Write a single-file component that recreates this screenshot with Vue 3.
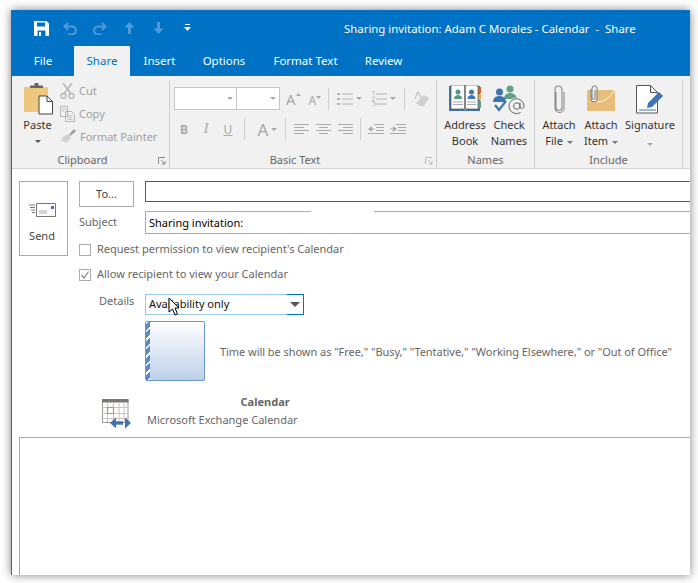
<template>
  <div class="screen">
    <div class="window">
      <!-- title bar -->
      <div class="titlebar">
        <div class="qat">
          <svg class="qat-save" width="15" height="15" viewBox="0 0 15 15"><path d="M0 0h12.5L15 2.5V15H0z" fill="#fff" /><path d="M3 1.500h8v4H3z" fill="#0072c6" /><path d="M3.500 9.500h8V15h-8z" fill="#0072c6" /><path d="M5 11h2v4H5z" fill="#fff" /></svg>
          <svg class="qat-dim" width="15" height="13" viewBox="0 0 15 13"><path d="M5 1 1.500 4.500 5 8M2 4.500h7a4 4 0 0 1 0 8H5" fill="none" stroke="#4f9bd8" stroke-width="2" /></svg>
          <svg class="qat-dim redo" width="15" height="13" viewBox="0 0 15 13"><path d="M10 1l3.500 3.500L10 8M13 4.500H6a4 4 0 0 0 0 8h4" fill="none" stroke="#4f9bd8" stroke-width="2" /></svg>
          <svg class="qat-dim up" width="11" height="12" viewBox="0 0 11 12"><path d="M5.500 0 10.500 5.500H7V12H4V5.500H.5z" fill="#4f9bd8" /></svg>
          <svg class="qat-dim down" width="11" height="12" viewBox="0 0 11 12"><path d="M5.500 12 10.500 6.500H7V0H4v6.500H.5z" fill="#4f9bd8" /></svg>
          <svg class="qat-more" width="7" height="8" viewBox="0 0 7 8"><path d="M1 0h5v1H1zM0 3h7L3.500 7z" fill="#fff" /></svg>
        </div>
        <div class="title">Sharing invitation: Adam C Morales - Calendar&nbsp; -&nbsp; Share</div>
      </div>

      <!-- tabs -->
      <div class="tabs">
        <div v-for="t in tabs" :key="t.name" class="tab" :class="{ active: t.name === 'Share' }" :style="{ width: t.width + 'px' }">{{ t.name }}</div>
      </div>

      <!-- ribbon -->
      <div class="ribbon">
        <div class="group clipboard">
          <div class="group-body">
            <div class="paste">
              <svg width="29" height="32" viewBox="0 0 29 32">
                <rect x="0" y="4" width="24" height="25" rx="1" fill="#eec77e" />
                <path d="M6 5V2.500h4.500V0h4v2.500H19V5z" fill="#666" />
                <path d="M15 13h8l5.500 5.500V31H15z" fill="#fff" stroke="#444" />
                <path d="M23 13v5.500h5.500" fill="none" stroke="#444" />
              </svg>
              <span>Paste</span>
              <i class="caret dark"></i>
            </div>
            <div class="small-col">
              <div class="small-btn">
                <svg width="15" height="16" viewBox="0 0 15 16"><path d="M3 0l8 11M12 0 4 11" stroke="#b5b5b5" stroke-width="1.500" fill="none" /><circle cx="3.500" cy="13" r="2.500" fill="none" stroke="#b5b5b5" stroke-width="1.300" /><circle cx="11.500" cy="13" r="2.500" fill="none" stroke="#b5b5b5" stroke-width="1.300" /></svg>
                <span>Cut</span>
              </div>
              <div class="small-btn">
                <svg width="15" height="16" viewBox="0 0 15 16"><path d="M.5.500h7v10h-7zM5.500 5.500h6l3 3v7h-9z" fill="#f1f1f1" stroke="#b5b5b5" /><path d="M2 3h4M2 5h2M7.500 9.500h5M7.500 11.500h5M7.500 13.500h5" stroke="#c4c4c4" /></svg>
                <span>Copy</span>
              </div>
              <div class="small-btn">
                <svg width="16" height="15" viewBox="0 0 16 15"><path d="M9 6l3-4 2-2 2 2-2 2-4 3z" fill="#9f9f9f" /><path d="M8 5l3 3-4 6-7-3 3-1-2-1 2-1z" fill="#d2d2d2" /></svg>
                <span>Format Painter</span>
              </div>
            </div>
          </div>
          <div class="group-label offset">Clipboard<svg class="launcher" width="8" height="8" viewBox="0 0 8 8"><path d="M.5 7V.5H7M3 3l4 4M7 4v3H4" fill="none" stroke="#888" /></svg></div>
        </div>

        <div class="group basic">
          <div class="group-body basic-body">
            <div class="basic-row top">
              <div class="combo font"><i class="caret"></i></div>
              <div class="combo size"><i class="caret"></i></div>
              <span class="glyph grow">A<svg width="5" height="3" viewBox="0 0 5 3"><path d="M0 3 2.500 0 5 3z" fill="#a9a9a9" /></svg></span>
              <span class="glyph shrink">A<svg width="5" height="3" viewBox="0 0 5 3"><path d="M0 0 2.500 3 5 0z" fill="#a9a9a9" /></svg></span>
              <b class="vsep first"></b>
              <svg class="list" width="16" height="15" viewBox="0 0 16 15"><path d="M0 2h3v2H0zM0 7h3v2H0zM0 12h3v2H0z" fill="#b5b5b5" /><path d="M5 3h11M5 8h11M5 13h11" stroke="#b5b5b5" /></svg>
              <i class="caret"></i>
              <svg class="list num" width="16" height="15" viewBox="0 0 16 15"><path d="M1 0h2v4M1 6h3L1 10h3M1 11h3v4H1" fill="none" stroke="#b5b5b5" stroke-width=".8" /><path d="M5 3h11M5 8h11M5 13h11" stroke="#b5b5b5" /></svg>
              <i class="caret"></i>
              <b class="vsep second"></b>
              <svg class="eraser" width="15" height="16" viewBox="0 0 15 16"><path d="M6 15l-4-3 8-8 5 3-5 8z" fill="#cfcfcf" /><path d="M1 8 3.500 1h1L7 7" fill="none" stroke="#b5b5b5" /></svg>
            </div>
            <div class="basic-row bottom">
              <span class="fmt b">B</span>
              <span class="fmt i">I</span>
              <span class="fmt u">U</span>
              <b class="vsep third"></b>
              <span class="fmt big">A</span>
              <i class="caret"></i>
              <b class="vsep fourth"></b>
              <svg v-for="(a, i) in aligns" :key="i" class="align" width="15" height="11" viewBox="0 0 15 11"><path :d="a" stroke="#ababab" fill="none" /></svg>
              <b class="vsep fifth"></b>
              <svg class="indent" width="16" height="11" viewBox="0 0 16 11"><path d="M6 .5h10M8 3.500h8M8 6.500h8M0 9.500h16" stroke="#ababab" /><path d="M0 5l4-3v6z" fill="#ababab" /><path d="M3 5h4" stroke="#ababab" /></svg>
              <svg class="indent two" width="16" height="11" viewBox="0 0 16 11"><path d="M6 .5h10M8 3.500h8M8 6.500h8M0 9.500h16" stroke="#ababab" /><path d="M7 5 3 2v6z" fill="#ababab" /><path d="M0 5h4" stroke="#ababab" /></svg>
            </div>
          </div>
          <div class="group-label offset">Basic Text<svg class="launcher" width="8" height="8" viewBox="0 0 8 8"><path d="M.5 7V.5H7M3 3l4 4M7 4v3H4" fill="none" stroke="#bbb" /></svg></div>
        </div>

        <div class="group names">
          <div class="group-body big-row">
            <div class="big-btn address">
              <svg width="32" height="26" viewBox="0 0 32 26">
                <path d="M0 1h2v23h13l1 1 1-1h12V1h2v25H0z" fill="#3f74b0" />
                <path d="M29 2h3v6h-3z" fill="#d9603b" /><path d="M29 9h3v6h-3z" fill="#e8b04b" /><path d="M29 16h3v7h-3z" fill="#5da283" />
                <path d="M2 0h13.500v24H2zM16.500 0H29v24H16.500z" fill="#fff" stroke="#555" stroke-width=".7" />
                <circle cx="9" cy="7" r="2.500" fill="#4f9a80" /><path d="M5 14c0-3 2-4 4-4s4 1 4 4z" fill="#4f9a80" />
                <circle cx="22.500" cy="7" r="2.500" fill="#3f74b0" /><path d="M18.500 14c0-3 2-4 4-4s4 1 4 4z" fill="#3f74b0" />
                <path d="M4 17h10M4 19.500h10M18 17h9M18 19.500h9" stroke="#aaa" />
              </svg>
              <span>Address<br />Book</span>
            </div>
            <div class="big-btn check">
              <svg width="32" height="30" viewBox="0 0 32 30">
                <circle cx="17" cy="4" r="3.500" fill="#5da283" /><path d="M11 14c0-4 3-6 6-6s7 2 7 6z" fill="#5da283" />
                <circle cx="6.500" cy="7" r="3.500" fill="#3f74b0" /><path d="M0 17c0-4 3-6 6.500-6s6.500 2 6.500 6z" fill="#3f74b0" />
                <path d="M2 20l4 5 7-9" fill="none" stroke="#3f74b0" stroke-width="2.200" />
                <circle cx="23.500" cy="21" r="8.500" fill="#f1f1f1" stroke="none" />
                <path d="M27.500 27.500A7.500 7.500 0 1 1 31 21c0 3-3.500 3.500-4 1v-4.500M27 21a3.200 3.200 0 1 1-6.400 0 3.200 3.200 0 0 1 6.400 0z" fill="none" stroke="#666" />
              </svg>
              <span>Check<br />Names</span>
            </div>
          </div>
          <div class="group-label">Names</div>
        </div>

        <div class="group include">
          <div class="group-body big-row">
            <div class="big-btn file">
              <svg width="12" height="29" viewBox="0 0 12 29"><path d="M3 7v15.500a3 3 0 0 0 6 0V4.500a3.500 3.500 0 0 0-7 0V23a4.500 4.500 0 0 0 9 0V7" fill="none" stroke="#8a8a8a" stroke-width="1.100" /></svg>
              <span>Attach<br />File <i class="caret inline"></i></span>
            </div>
            <div class="big-btn item">
              <svg width="29" height="27" viewBox="0 0 29 27">
                <rect x="0" y="5" width="28" height="21" fill="#e8bd7c" />
                <path d="M8 16c8 3 14-3 20-11" fill="none" stroke="#fff" stroke-width="1" />
                <path d="M4 4v10a3 3 0 0 0 6 0V3.500a2.500 2.500 0 0 0-5 0V13a1.500 1.500 0 0 0 3 0V5" fill="#f1f1f1" stroke="#777" />
              </svg>
              <span>Attach<br />Item <i class="caret inline"></i></span>
            </div>
            <div class="big-btn signature">
              <svg width="28" height="30" viewBox="0 0 28 30">
                <path d="M.5.500h14l7 7V28H.5z" fill="#fff" stroke="#555" />
                <path d="M14.500.5v7h7" fill="none" stroke="#555" />
                <path d="M3 25h17" stroke="#3f74b0" />
                <path d="M11 23l1-5L23 7l4 4-11 11z" fill="#3f74b0" />
              </svg>
              <span>Signature<br /><i class="caret sig-caret"></i></span>
            </div>
          </div>
          <div class="group-label">Include</div>
        </div>
      </div>

      <!-- compose form -->
      <div class="compose">
        <div class="send">
          <svg width="27" height="14" viewBox="0 0 27 14"><path d="M7.500.5h19v13h-19z" fill="#fff" stroke="#777" /><path d="M10 8h8M10 10h8" stroke="#aaa" /><path d="M22 3h3v3h-3z" fill="#3f74b0" /><path d="M0 2h6M1 4.500h5M2 7h4M3 9.500h3" stroke="#777" /></svg>
          <span>Send</span>
        </div>
        <div class="fields">
          <div class="row to-row">
            <div class="to-btn">To...</div>
            <div class="to-input"></div>
          </div>
          <div class="row subject-row">
            <div class="label subject-label">Subject</div>
            <div class="subject-input">Sharing invitation:<span class="border-gap"></span></div>
          </div>
          <label class="check-row first">
            <span class="box"></span>
            <span class="text">Request permission to view recipient's Calendar</span>
          </label>
          <label class="check-row second">
            <span class="box"><svg width="12" height="12" viewBox="0 0 12 12"><path d="M2.500 6 5 9l4.500-6.500" fill="none" stroke="#888" stroke-width="1.300" /></svg></span>
            <span class="text">Allow recipient to view your Calendar</span>
          </label>
          <div class="row details-row">
            <div class="label details-label">Details</div>
            <div class="select">
              <span>Availability only</span>
              <i class="select-arrow"></i>
            </div>
          </div>
          <div class="row preview-row">
            <div class="preview"></div>
            <div class="text">Time will be shown as "Free," "Busy," "Tentative," "Working Elsewhere," or "Out of Office"</div>
          </div>
          <div class="row calendar-row">
            <svg class="cal-icon" width="30" height="30" viewBox="0 0 30 30">
              <path d="M.5 1h25.500v22.500H.5z" fill="#fff" stroke="#999" />
              <path d="M0 0h26.500v3.500H0z" fill="#777" />
              <path d="M5.500 3v20M11.500 3v20M17 3v20M22 3v20M0 8.500h26M0 14.500h26M0 19.500h26" stroke="#c4c4c4" />
              <path d="M5.500 8.500h6v6h-6z" fill="#fff" stroke="#e8893a" stroke-width="1.200" />
              <path d="M0 24h8v6H0zM26 24h4v6h-4z" fill="#fff" />
              <path d="M12 24h9" stroke="#3f74b0" stroke-width="3.400" />
              <path d="M8 24l6-5.500v11zM29 24l-6-5.500v11z" fill="#3f74b0" />
            </svg>
            <div class="cal-text">
              <div class="cal-name">Calendar</div>
              <div class="cal-type">Microsoft Exchange Calendar</div>
            </div>
          </div>
        </div>
      </div>

      <div class="body-box"></div>

      <!-- mouse pointer over the dropdown -->
      <svg class="cursor" width="13" height="20" viewBox="0 0 13 20"><path d="M1 1v14l3.500-3 2.500 6 2.500-1-2.500-6H11z" fill="#fff" stroke="#000" /></svg>
    </div>
  </div>
</template>

<script setup>
const tabs = [
  { name: 'File', width: 62 },
  { name: 'Share', width: 56 },
  { name: 'Insert', width: 59 },
  { name: 'Options', width: 70 },
  { name: 'Format Text', width: 93 },
  { name: 'Review', width: 63 },
]
const aligns = [
  'M0 .5h15M0 3.500h10M0 6.500h15M0 9.500h10',
  'M0 .5h15M3 3.500h9M0 6.500h15M3 9.500h9',
  'M0 .5h15M5 3.500h10M0 6.500h15M5 9.500h10',
]
</script>

<style>
html, body {
  margin: 0;
  background: #fff;
}
</style>

<style scoped>
.screen {
  width: 698px;
  height: 583px;
  box-sizing: border-box;
  padding: 10px 8px 8px 11px;
  overflow: hidden;
  background: #fff;
  font-family: "Noto Sans", "Liberation Sans", sans-serif;
  font-size: 11px;
  color: #444;
}

.window {
  position: relative;
  height: 100%;
  display: flex;
  flex-direction: column;
  box-sizing: border-box;
  border-left: 1px solid #0072c6;
  background: #fff;
  box-shadow: 0 0 9px rgba(0, 0, 0, 0.5);
}

/* title bar */
.titlebar {
  height: 36px;
  flex: none;
  display: flex;
  align-items: center;
  background: #0072c6;
  color: #fff;
}

.qat {
  display: flex;
  align-items: center;
  width: 332px;
  padding-left: 22px;
  box-sizing: border-box;
  flex: none;
}

.qat-dim {
  margin-left: 14px;
}

.qat-dim.up {
  margin-left: 17px;
}

.qat-dim.down {
  margin-left: 18px;
}

.qat-more {
  margin-left: 20px;
}

.title {
  font-size: 11.4px;
  white-space: nowrap;
}

/* tabs */
.tabs {
  height: 30px;
  flex: none;
  display: flex;
  background: #0072c6;
}

.tab {
  text-align: center;
  line-height: 29px;
  font-size: 11.5px;
  color: #fff;
  white-space: nowrap;
}

.tab.active {
  background: #f1f1f1;
  color: #0072c6;
}

/* ribbon */
.ribbon {
  height: 93px;
  flex: none;
  box-sizing: border-box;
  display: flex;
  background: #f1f1f1;
  border-bottom: 1px solid #d4d4d4;
  padding-right: 8px;
}

.group {
  position: relative;
  display: flex;
  flex-direction: column;
  flex: none;
  box-sizing: border-box;
  border-right: 1px solid #cfcfcf;
  height: 88px;
  margin-top: 4px;
}

.group-body {
  flex: 1;
  display: flex;
}

.group-label {
  text-align: center;
  height: 16px;
  line-height: 15px;
  color: #666;
}

.group-label.offset {
  padding-right: 16px;
}

.launcher {
  position: absolute;
  right: 3px;
  bottom: 3px;
}

.clipboard {
  width: 158px;
}

.basic {
  width: 267px;
}

.names {
  width: 98px;
}

.include {
  width: 148px;
}

.caret {
  display: inline-block;
  width: 0;
  height: 0;
  border-left: 3px solid transparent;
  border-right: 3px solid transparent;
  border-top: 3px solid #a9a9a9;
}

.caret.dark {
  border-top-color: #555;
}

.caret.inline {
  vertical-align: middle;
  margin-left: 1px;
  border-top-color: #777;
}

.sig-caret {
  vertical-align: middle;
  margin-top: 4px;
}

/* clipboard */
.paste {
  width: 48px;
  display: flex;
  flex-direction: column;
  align-items: center;
  padding-top: 3px;
  color: #333;
}

.paste span {
  line-height: 16px;
  margin-top: 2px;
  margin-left: 3px;
}

.paste .caret {
  margin-top: 7px;
  margin-left: 3px;
}

.paste svg {
  margin-left: 5px;
}

.small-col {
  margin-top: -1px;
}

.small-btn {
  height: 23px;
  display: flex;
  align-items: center;
  gap: 4px;
  color: #a0a0a0;
  white-space: nowrap;
}

/* basic text */
.basic-body {
  flex-direction: column;
  padding-left: 4px;
}

.basic-row {
  display: flex;
  align-items: center;
}

.basic-row.top {
  height: 23px;
  margin-top: 7px;
}

.basic-row.bottom {
  height: 22px;
  margin-top: 8px;
  margin-left: -1px;
}

.combo {
  height: 23px;
  box-sizing: border-box;
  background: #fff;
  border: 1px solid #c6c6c6;
  display: flex;
  align-items: center;
  justify-content: flex-end;
  padding-right: 3px;
}

.combo.font {
  width: 63px;
}

.combo.size {
  width: 43px;
  border-left: 0;
}

.glyph {
  display: flex;
  color: #a9a9a9;
  font-size: 15px;
}

.glyph svg {
  margin-top: 4px;
}

.glyph.grow {
  margin-left: 6px;
}

.glyph.shrink {
  margin-left: 8px;
  font-size: 12px;
  margin-top: 3px;
}

.vsep {
  width: 1px;
  height: 22px;
  background: #cfcfcf;
}

.vsep.first {
  margin-left: 7px;
}

.list {
  margin: 0 3px 0 8px;
}

.list.num {
  margin-left: 9px;
}

.vsep.second {
  margin-left: 8px;
}

.eraser {
  margin-left: 9px;
}

.fmt {
  color: #a9a9a9;
  font-size: 12px;
  width: 22px;
  text-align: center;
}

.fmt.b {
  font-weight: 700;
}

.fmt.i {
  font-style: italic;
  font-family: "Liberation Serif", serif;
  font-size: 14px;
}

.fmt.u {
  text-decoration: underline;
}

.fmt.big {
  font-size: 17px;
  width: 16px;
  margin-left: 10px;
}

.vsep.third {
  margin-left: 5px;
}

.vsep.fourth {
  margin-left: 8px;
  margin-right: 8px;
}

.align {
  margin-right: 7px;
}

.vsep.fifth {
  margin-right: 7px;
}

.indent.two {
  margin-left: 6px;
}

/* big ribbon buttons */
.big-row {
  align-items: flex-start;
}

.big-btn {
  position: relative;
  display: flex;
  flex-direction: column;
  align-items: center;
  text-align: center;
  line-height: 16px;
  color: #333;
  height: 72px;
  padding-top: 5px;
  box-sizing: border-box;
}

.big-btn svg {
  flex: none;
}

.big-btn > span {
  white-space: nowrap;
  position: absolute;
  top: 37px;
}

.address {
  width: 44px;
  margin-left: 6px;
}

.check {
  width: 44px;
}

.file {
  width: 42px;
  margin-left: 3px;
}

.item {
  width: 42px;
}

.signature {
  width: 56px;
}

/* form */
.compose {
  flex: none;
  height: 268px;
  box-sizing: border-box;
  display: flex;
  padding: 12px 0 0 7px;
}

.send {
  width: 49px;
  height: 75px;
  box-sizing: border-box;
  border: 1px solid #ababab;
  display: flex;
  flex-direction: column;
  align-items: center;
  padding: 21px 3px 0 0;
  color: #444;
}

.send span {
  margin-top: 11px;
  line-height: 16px;
}

.fields {
  flex: 1;
  margin-left: 11px;
  min-width: 0;
}

.row {
  display: flex;
}

.label {
  color: #666;
}

.to-row {
  height: 30px;
  align-items: flex-start;
}

.to-btn {
  width: 55px;
  height: 26px;
  box-sizing: border-box;
  border: 1px solid #ababab;
  text-align: center;
  line-height: 24px;
  color: #444;
}

.to-input {
  flex: 1;
  height: 21px;
  box-sizing: border-box;
  margin-left: 11px;
  border: 1px solid #0072c6;
  border-right: 0;
}

.subject-row {
  height: 23px;
}

.subject-label {
  width: 66px;
  line-height: 21px;
}

.subject-input {
  position: relative;
  flex: 1;
  box-sizing: border-box;
  border: 1px solid #ababab;
  border-right: 0;
  line-height: 21px;
  padding-left: 3px;
  color: #000;
}

.border-gap {
  position: absolute;
  left: 165px;
  top: -1px;
  width: 63px;
  height: 1px;
  background: #fff;
}

.check-row {
  display: flex;
  align-items: center;
  height: 12px;
  margin-top: 10px;
}

.check-row.second {
  margin-top: 13px;
}

.check-row .text {
  margin-top: -3px;
}

.box {
  width: 12px;
  height: 12px;
  box-sizing: border-box;
  border: 1px solid #ababab;
  background: #fff;
  flex: none;
  display: flex;
  align-items: center;
  justify-content: center;
  margin-right: 6px;
}

.box svg {
  flex: none;
}

.text {
  color: #666;
  white-space: nowrap;
}

.details-row {
  height: 20px;
  margin-top: 13px;
}

.details-label {
  width: 66px;
  padding-left: 20px;
  box-sizing: border-box;
  line-height: 14px;
}

.select {
  position: relative;
  width: 159px;
  height: 21px;
  box-sizing: border-box;
  border: 1px solid #9cc9e8;
  line-height: 17px;
  padding-left: 3px;
  color: #111;
}

.select-arrow {
  position: absolute;
  right: -1px;
  top: -1px;
  width: 16px;
  height: 19px;
  border: 1px solid #0072c6;
  border-left: 0;
}

.select-arrow::after {
  content: "";
  position: absolute;
  left: 3px;
  top: 7px;
  border-left: 5px solid transparent;
  border-right: 5px solid transparent;
  border-top: 5px solid #555;
}

.preview-row {
  height: 60px;
  margin-top: 7px;
  padding-left: 66px;
  align-items: center;
}

.preview {
  width: 60px;
  height: 60px;
  box-sizing: border-box;
  border: 1px solid #6a96cd;
  border-radius: 2px;
  background:
    repeating-linear-gradient(135deg, #fff 0 1.5px, #5b8ac6 1.5px 6px) left / 4px 100% no-repeat,
    linear-gradient(#fff, #bdd0e9);
  flex: none;
}

.preview-row .text {
  margin-left: 15px;
  letter-spacing: -0.05px;
}

.calendar-row {
  margin-top: 13px;
  padding-left: 23px;
  align-items: flex-start;
}

.cal-icon {
  flex: none;
  margin-top: 5px;
}

.cal-text {
  margin-left: 15px;
  color: #666;
}

.cal-name {
  text-align: right;
  padding-right: 8px;
  font-weight: 700;
  line-height: 16px;
}

.cal-type {
  line-height: 16px;
  margin-top: 2px;
}

.body-box {
  flex: 1;
  margin-left: 7px;
  border: 1px solid #a9a9b5;
  border-right: 0;
  border-bottom: 0;
}

.cursor {
  position: absolute;
  left: 156px;
  top: 287px;
}
</style>
